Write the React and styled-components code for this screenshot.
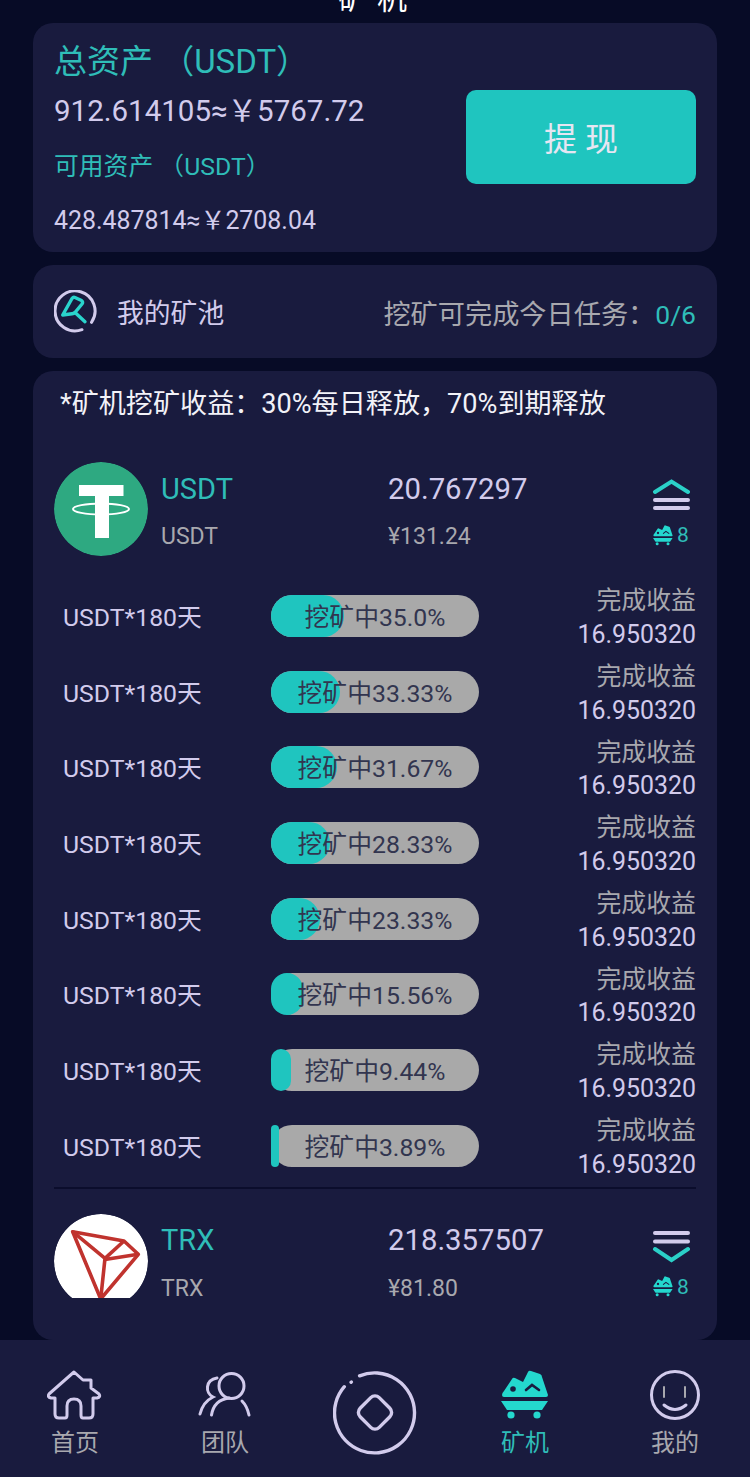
import React from 'react'
import styled, { createGlobalStyle } from 'styled-components'

const TEAL = '#2fbdb8'
const LAVENDER = '#d2cbec'
const GREY = '#a8a8ae'

const tasks = ['35.0', '33.33', '31.67', '28.33', '23.33', '15.56', '9.44', '3.89']

const CartIcon = ({ width, height }) => (
  <svg width={width} height={height} viewBox="0 0 48 50">
    <path d="M1 25 Q1 23 3 21 L11 9 Q12 7 14 8 L22 12 L27 2 Q28 0 30 1 L39 4 Q41 5 41 7 L47 25 Q47 27 45 27 L3 27 Q1 27 1 25 Z" fill="#24d8ce" />
    <circle cx="12" cy="19" r="2.8" fill="#1a1c40" />
    <path d="M25 20 L31 15 L38 20" fill="none" stroke="#1a1c40" strokeWidth="2.6" strokeLinecap="round" />
    <path d="M0 31 L47 31 L41 40 L6 40 Z" fill="#24d8ce" />
    <circle cx="10" cy="45" r="3.6" fill="#24d8ce" />
    <circle cx="36" cy="45" r="3.6" fill="#24d8ce" />
  </svg>
)

const PoolIcon = () => (
  <svg width="44" height="44" viewBox="54 290 44 44" fill="none">
    <path d="M91.5 322.3 A20 20 0 1 0 82 329.7" stroke={LAVENDER} strokeWidth="3" strokeLinecap="round" />
    <path d="M62.7 315 L72 298.5 Q73.3 296.8 75 297.5 L81.5 300.5 Q83.5 302 82 304 L75 312.5 Q74 313.5 72 313.7 Z" stroke="#2ad4cc" strokeWidth="3.4" strokeLinejoin="round" />
    <path d="M75 312.5 L85 321.7" stroke="#2ad4cc" strokeWidth="3.4" strokeLinecap="round" />
  </svg>
)

const TetherLogo = () => (
  <svg width="94" height="94" viewBox="54 462 94 94">
    <circle cx="101" cy="509" r="47" fill="#2ea981" />
    <path d="M79 485 H123.5 V496 H109 V538 H95 V496 H79 Z" fill="#fff" />
    <ellipse cx="101" cy="509" rx="28" ry="5.5" fill="none" stroke="#fff" strokeWidth="2" />
  </svg>
)

const TronLogo = () => (
  <svg width="94" height="94" viewBox="54 1214 94 94">
    <circle cx="101" cy="1261" r="47" fill="#fff" />
    <g fill="none" stroke="#c0332e" strokeWidth="3.6" strokeLinejoin="round">
      <path d="M72.7 1231.7 L124 1241 L138.3 1254.3 L100.7 1299 Z" />
      <path d="M72.7 1231.7 L105 1258.3 L100.7 1299" />
      <path d="M105 1258.3 L124 1241" />
      <path d="M105 1259.5 L138.3 1254.3" />
    </g>
  </svg>
)

const StackIcon = ({ open }) => (
  <svg width="38" height="36" viewBox="0 0 38 36" fill="none" strokeWidth="4" strokeLinecap="round">
    {open ? (
      <>
        <path d="M3 14 L19.5 3.5 L36 14" stroke="#2bd0c8" />
        <path d="M3 22 H36 M3 30 H36" stroke={LAVENDER} />
      </>
    ) : (
      <>
        <path d="M3 3 H36 M3 11.5 H36" stroke={LAVENDER} />
        <path d="M3 19 L19.5 30 L36 19" stroke="#2bd0c8" />
      </>
    )}
  </svg>
)

const HomeIcon = () => (
  <svg width="56" height="54" viewBox="0 0 56 54" fill="none" stroke={LAVENDER} strokeWidth="3" strokeLinejoin="round">
    <path d="M27 4 L36 12 L44 12 L44 20 L52 26 Q54 29 50 30 L46 30 L46 46 Q46 50 42 50 L36 50 Q34 50 34 47 L34 38 Q34 31 27 31 Q20 31 20 38 L20 47 Q20 50 18 50 L12 50 Q8 50 8 46 L8 30 L4 30 Q0 29 2 26 Z" />
  </svg>
)

const TeamIcon = () => (
  <svg width="56" height="54" viewBox="197 1368 56 54" fill="none" stroke={LAVENDER} strokeWidth="3" strokeLinecap="round">
    <circle cx="231.5" cy="1386" r="12.5" />
    <path d="M211.5 1415 Q214 1400 229 1398" />
    <path d="M242 1401 Q247 1406 249 1415" />
    <path d="M217 1378 C205 1380 205 1393 213 1397 Q203 1402 200 1414" />
  </svg>
)

const CenterIcon = () => (
  <svg width="84" height="84" viewBox="332 1371 84 84" fill="none" stroke={LAVENDER} strokeWidth="3.4" strokeLinecap="round">
    <path d="M358.6 1375.8 A40 40 0 1 1 343.3 1386.7" />
    <path d="M350 1382.3 L350.4 1382" />
    <rect x="360.5" y="1399" width="27" height="27" rx="6" transform="rotate(45 374 1412.5)" />
  </svg>
)

const SmileIcon = () => (
  <svg width="56" height="54" viewBox="647 1368 56 54" fill="none" strokeLinecap="round">
    <circle cx="675" cy="1395" r="23.5" stroke={LAVENDER} strokeWidth="3" />
    <path d="M664 1387 V1397 M685 1387 V1397" stroke={GREY} strokeWidth="2" />
    <path d="M664 1405 Q675 1414 686 1405" stroke={LAVENDER} strokeWidth="3" />
  </svg>
)

const Coin = ({ logo, name, amount, cny, open }) => (
  <CoinHead>
    {logo}
    <CoinCol $width={227}>
      <CoinName>{name}</CoinName>
      <SubText>{name}</SubText>
    </CoinCol>
    <CoinCol $width={264}>
      <CoinAmount>{amount}</CoinAmount>
      <SubText>{cny}</SubText>
    </CoinCol>
    <CoinSide>
      <StackIcon open={open} />
      <CartCount>
        <CartIcon width={20} height={21} />
        8
      </CartCount>
    </CoinSide>
  </CoinHead>
)

export default function App() {
  return (
    <>
      <GlobalStyle />
      <Page>
        <Title><span>矿机</span></Title>
        <Content>
          <AssetCard>
            <AssetText>
              <BigLabel>总资产 （USDT）</BigLabel>
              <BigValue>912.614105≈￥5767.72</BigValue>
              <SmallLabel>可用资产 （USDT）</SmallLabel>
              <SmallValue>428.487814≈￥2708.04</SmallValue>
            </AssetText>
            <WithdrawButton>提 现</WithdrawButton>
          </AssetCard>
          <PoolCard>
            <PoolIcon />
            <PoolName>我的矿池</PoolName>
            <PoolTask>挖矿可完成今日任务：<em>0/6</em></PoolTask>
          </PoolCard>
          <MineCard>
            <Note>*矿机挖矿收益：30%每日释放，70%到期释放</Note>
            <CoinList>
              <Coin logo={<TetherLogo />} name="USDT" amount="20.767297" cny="¥131.24" open />
              <Tasks>
                {tasks.map((percent, i) => (
                  <TaskRow key={i}>
                    <TaskName>USDT*180天</TaskName>
                    <Track>
                      <Fill style={{ width: `${percent}%` }} />
                      <TrackLabel>挖矿中{percent}%</TrackLabel>
                    </Track>
                    <TaskIncome>
                      <span>完成收益</span>
                      <b>16.950320</b>
                    </TaskIncome>
                  </TaskRow>
                ))}
              </Tasks>
              <Divider />
              <Coin logo={<TronLogo />} name="TRX" amount="218.357507" cny="¥81.80" />
            </CoinList>
          </MineCard>
        </Content>
        <BottomNav>
          <NavItem><NavIcon><HomeIcon /></NavIcon><NavLabel>首页</NavLabel></NavItem>
          <NavItem><NavIcon><TeamIcon /></NavIcon><NavLabel>团队</NavLabel></NavItem>
          <NavItem $center><CenterIcon /></NavItem>
          <NavItem><NavIcon><CartIcon width={48} height={50} /></NavIcon><NavLabel $active>矿机</NavLabel></NavItem>
          <NavItem><NavIcon><SmileIcon /></NavIcon><NavLabel>我的</NavLabel></NavItem>
        </BottomNav>
      </Page>
    </>
  )
}

const GlobalStyle = createGlobalStyle`
  html, body {
    margin: 0;
    padding: 0;
    background: #070b26;
  }
  body {
    font-family: Roboto, "Noto Sans CJK SC", sans-serif;
  }
`
const Page = styled.div`
  width: 750px;
  height: 1477px;
  display: flex;
  flex-direction: column;
  overflow: hidden;
  background: #070b26;
`
const Title = styled.div`
  height: 23px;
  flex-shrink: 0;
  overflow: hidden;
  text-align: center;
  color: #fff;
  font-size: 30px;
  line-height: 30px;
  letter-spacing: 9px;
  padding-left: 4px;
  span {
    display: block;
    margin-top: -16px;
  }
`
const Content = styled.div`
  flex: 1;
  min-height: 0;
  padding: 0 33px;
  display: flex;
  flex-direction: column;
  gap: 13px;
`
const Card = styled.div`
  background: #191b3e;
  border-radius: 20px;
  padding: 0 21px;
`
const AssetCard = styled(Card)`
  height: 229px;
  box-sizing: border-box;
  display: flex;
  justify-content: space-between;
  align-items: center;
`
const AssetText = styled.div`
  padding-top: 12px;
`
const BigLabel = styled.div`
  color: ${TEAL};
  font-size: 33px;
  line-height: 46px;
  white-space: nowrap;
`
const BigValue = styled.div`
  margin: -2px 0 1px;
  color: ${LAVENDER};
  font-size: 29.5px;
  line-height: 56px;
  white-space: nowrap;
`
const SmallLabel = styled.div`
  color: ${TEAL};
  font-size: 24.8px;
  line-height: 54px;
  white-space: nowrap;
`
const SmallValue = styled.div`
  color: ${LAVENDER};
  font-size: 24.9px;
  line-height: 54px;
  white-space: nowrap;
`
const WithdrawButton = styled.button`
  width: 230px;
  height: 94px;
  margin-top: -1px;
  border: 0;
  border-radius: 10px;
  background: #1fc5bf;
  color: #e6e6f2;
  font-family: inherit;
  font-size: 33px;
`
const PoolCard = styled(Card)`
  height: 93px;
  display: flex;
  align-items: center;
`
const PoolName = styled.span`
  margin-left: 19px;
  color: ${LAVENDER};
  font-size: 26.8px;
`
const PoolTask = styled.span`
  margin-left: auto;
  color: ${GREY};
  font-size: 27.2px;
  em {
    font-style: normal;
    font-size: 26.5px;
    color: ${TEAL};
  }
`
const MineCard = styled(Card)`
  padding-top: 13px;
  padding-bottom: 42px;
`
const Note = styled.div`
  padding-left: 6px;
  color: #f2f2f8;
  font-size: 27.1px;
  line-height: 40px;
  margin-bottom: 38px;
  white-space: nowrap;
`
const CoinList = styled.div`
  height: 836px;
  overflow: hidden;
`
const CoinHead = styled.div`
  height: 94px;
  display: flex;
  align-items: flex-start;
  > svg {
    flex-shrink: 0;
    border-radius: 50%;
    margin-right: 13px;
  }
`
const CoinCol = styled.div`
  width: ${(p) => p.$width}px;
  flex-shrink: 0;
  padding-top: 3.5px;
`
const CoinName = styled.div`
  color: ${TEAL};
  font-size: 29px;
  line-height: 47px;
`
const CoinAmount = styled.div`
  color: ${LAVENDER};
  font-size: 29.3px;
  line-height: 47px;
`
const SubText = styled.div`
  margin-top: 14.5px;
  color: ${GREY};
  font-size: 23px;
  line-height: 20px;
`
const CoinSide = styled.div`
  flex: 1;
  display: flex;
  flex-direction: column;
  align-items: center;
  margin-right: 8px;
  padding-top: 16px;
  box-sizing: border-box;
  svg {
    display: block;
  }
`
const CartCount = styled.div`
  margin-top: 10px;
  display: flex;
  align-items: center;
  gap: 4px;
  color: ${TEAL};
  font-size: 21px;
  line-height: 22px;
`
const Tasks = styled.div`
  margin-top: 22px;
`
const TaskRow = styled.div`
  height: 75.7px;
  display: flex;
  align-items: center;
`
const TaskName = styled.div`
  width: 217px;
  flex-shrink: 0;
  box-sizing: border-box;
  padding: 0 0 2px 9px;
  color: ${LAVENDER};
  font-size: 24.8px;
  white-space: nowrap;
`
const Track = styled.div`
  position: relative;
  width: 208px;
  height: 42px;
  border-radius: 21px;
  background: #a9a9a9;
  flex-shrink: 0;
`
const Fill = styled.div`
  height: 100%;
  border-radius: 21px;
  background: #1fc5bf;
`
const TrackLabel = styled.div`
  position: absolute;
  inset: 0;
  text-align: center;
  line-height: 46px;
  color: #32354f;
  font-size: 24.8px;
  white-space: nowrap;
`
const TaskIncome = styled.div`
  flex: 1;
  padding-top: 4px;
  text-align: right;
  font-size: 24.9px;
  line-height: 33.7px;
  span {
    display: block;
    color: ${GREY};
  }
  b {
    display: block;
    font-weight: 400;
    color: ${LAVENDER};
  }
`
const Divider = styled.div`
  height: 2px;
  margin: 3px 0 25px;
  background: #0b0d2c;
`
const BottomNav = styled.nav`
  height: 137px;
  flex-shrink: 0;
  display: flex;
  background: #191b3e;
`
const NavItem = styled.div`
  width: 150px;
  padding-top: ${(p) => (p.$center ? 31 : 26)}px;
  box-sizing: border-box;
  display: flex;
  flex-direction: column;
  align-items: center;
`
const NavIcon = styled.div`
  height: 58px;
  display: flex;
  align-items: center;
`
const NavLabel = styled.div`
  padding-top: 1px;
  color: ${(p) => (p.$active ? TEAL : GREY)};
  font-size: 24px;
  line-height: 36px;
`
